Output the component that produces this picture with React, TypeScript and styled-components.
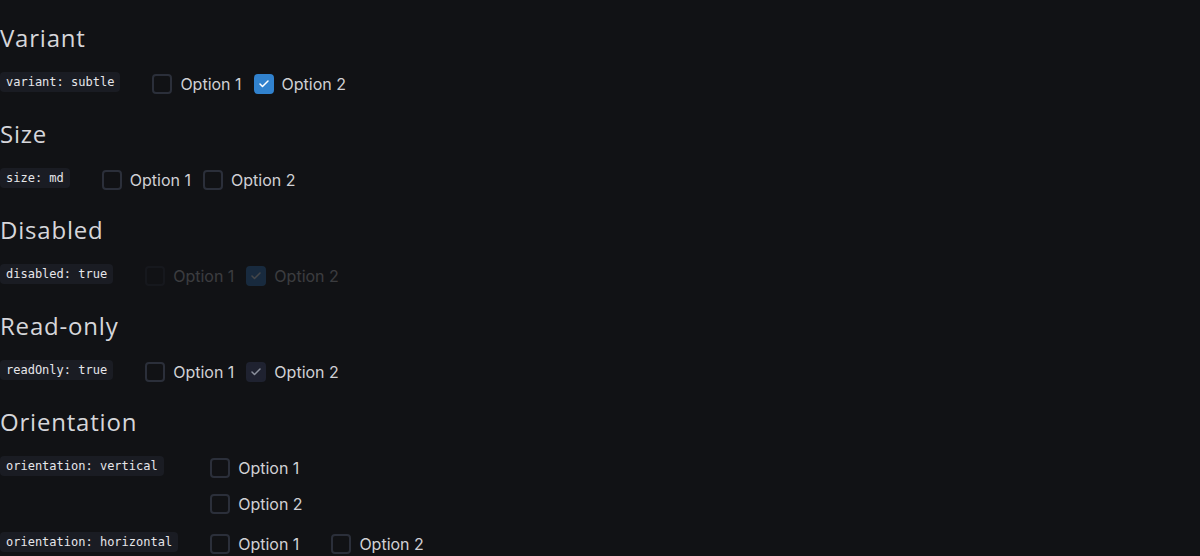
import React from "react";
import styled, { createGlobalStyle, css } from "styled-components";

const GlobalStyle = createGlobalStyle`
  html, body {
    margin: 0;
    padding: 0;
    background-color: #111215;
  }
  body {
    font-family: Inter, "Noto Sans", sans-serif;
    color: #d4d4d8;
  }
`;

const Page = styled.div`
  padding-top: 20px;
  display: flex;
  flex-direction: column;
  gap: 20px;
`;

const Section = styled.section`
  display: flex;
  flex-direction: column;
  gap: 16px;
`;

const Heading = styled.h2`
  margin: 0;
  font-family: "Open Sans", sans-serif;
  font-size: 24px;
  font-weight: 500;
  line-height: 36px;
  color: #d6d6da;
  letter-spacing: 0.8px;
`;

const PropGrid = styled.div`
  display: grid;
  grid-template-columns: max-content 1fr;
  column-gap: 32px;
  row-gap: 16px;
  align-items: start;
`;

const Code = styled.code`
  justify-self: start;
  font-family: "DejaVu Sans Mono", "Liberation Mono", monospace;
  font-size: 12px;
  line-height: 20px;
  padding: 0 6px;
  border-radius: 4px;
  background-color: #1a1c23;
  color: #e6e6ea;
`;

const Group = styled.div<{ $vertical?: boolean; $gap: number }>`
  display: flex;
  flex-direction: ${p => (p.$vertical ? "column" : "row")};
  gap: ${p => p.$gap}px;
  align-items: flex-start;
`;

const Item = styled.label<{ $disabled?: boolean }>`
  display: flex;
  align-items: center;
  gap: 8px;
  font-size: 16px;
  line-height: 24px;
  color: #d0d0d4;
  ${p =>
    p.$disabled &&
    css`
      opacity: 0.22;
    `}
`;

const Box = styled.span<{ $checked?: boolean; $readOnly?: boolean }>`
  width: 20px;
  height: 20px;
  box-sizing: border-box;
  border-radius: 4px;
  border: 2px solid #2b2f3a;
  display: flex;
  align-items: center;
  justify-content: center;
  ${p =>
    p.$checked &&
    css`
      border-color: #3182ce;
      background-color: #3182ce;
      color: #ffffff;
    `}
  ${p =>
    p.$checked &&
    p.$readOnly &&
    css`
      border-color: #1f2230;
      background-color: #1f2230;
      color: #8b909c;
    `}
`;

const Check = () => (
  <svg width="12" height="12" viewBox="0 0 24 24" fill="none" stroke="currentColor" strokeWidth="3" strokeLinecap="round" strokeLinejoin="round">
    <path d="M20 6 9 17l-5-5" />
  </svg>
);

type Opt = { label: string; checked?: boolean };

const CheckboxGroup = ({
  options,
  vertical,
  gap = 12,
  disabled,
  readOnly
}: {
  options: Opt[];
  vertical?: boolean;
  gap?: number;
  disabled?: boolean;
  readOnly?: boolean;
}) => (
  <Group $vertical={vertical} $gap={gap}>
    {options.map(o => (
      <Item key={o.label} $disabled={disabled}>
        <Box $checked={o.checked} $readOnly={readOnly}>
          {o.checked && <Check />}
        </Box>
        {o.label}
      </Item>
    ))}
  </Group>
);

const plain: Opt[] = [{ label: "Option 1" }, { label: "Option 2" }];
const secondOn: Opt[] = [{ label: "Option 1" }, { label: "Option 2", checked: true }];

export default function App() {
  return (
    <>
      <GlobalStyle />
      <Page>
        <Section>
          <Heading>Variant</Heading>
          <PropGrid>
            <Code>variant: subtle</Code>
            <CheckboxGroup options={secondOn} />
          </PropGrid>
        </Section>
        <Section>
          <Heading>Size</Heading>
          <PropGrid>
            <Code>size: md</Code>
            <CheckboxGroup options={plain} />
          </PropGrid>
        </Section>
        <Section>
          <Heading>Disabled</Heading>
          <PropGrid>
            <Code>disabled: true</Code>
            <CheckboxGroup options={secondOn} disabled />
          </PropGrid>
        </Section>
        <Section>
          <Heading>Read-only</Heading>
          <PropGrid>
            <Code>readOnly: true</Code>
            <CheckboxGroup options={secondOn} readOnly />
          </PropGrid>
        </Section>
        <Section>
          <Heading>Orientation</Heading>
          <PropGrid>
            <Code>orientation: vertical</Code>
            <CheckboxGroup options={plain} vertical />
            <Code>orientation: horizontal</Code>
            <CheckboxGroup options={plain} gap={32} />
          </PropGrid>
        </Section>
      </Page>
    </>
  );
}
